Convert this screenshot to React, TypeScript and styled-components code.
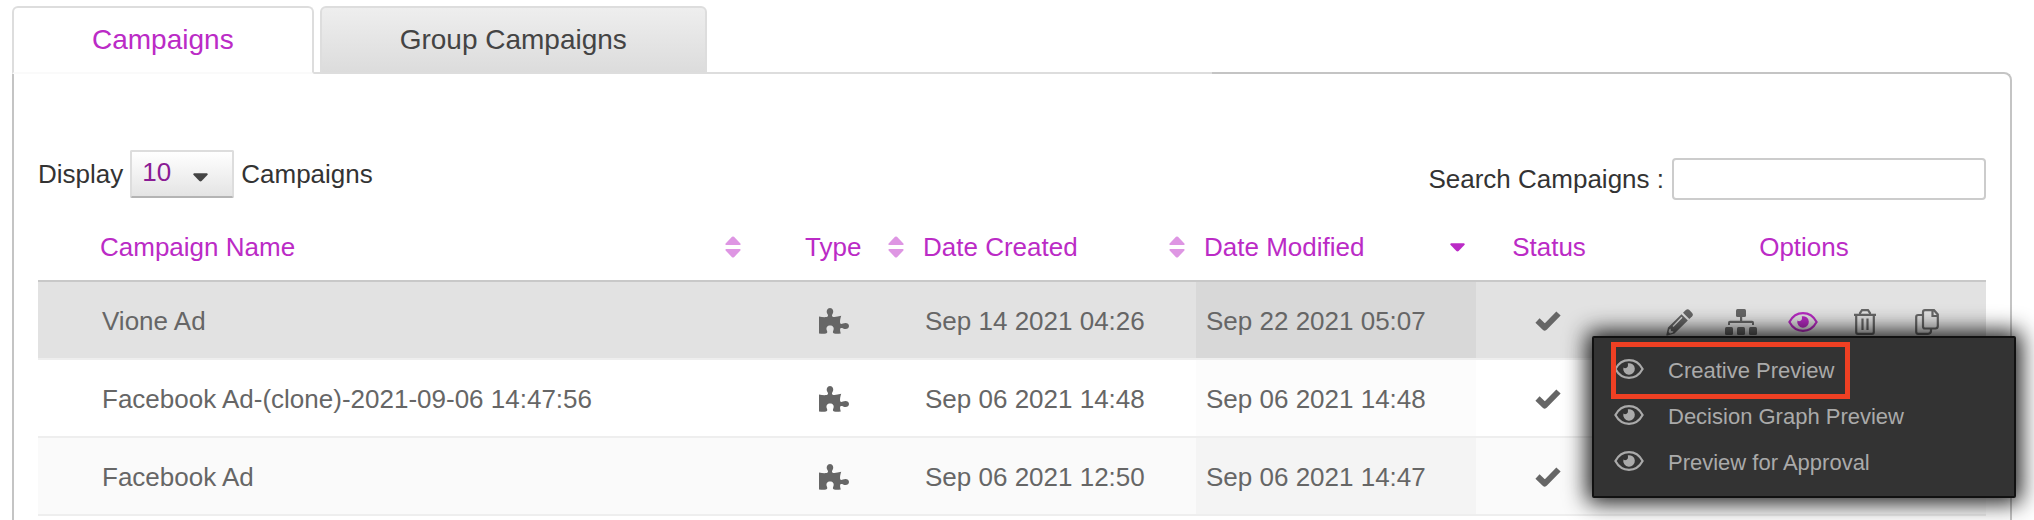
import React from "react";
import styled, { createGlobalStyle } from "styled-components";

const Global = createGlobalStyle`
  *, *::before, *::after { box-sizing: border-box; }
  body {
    margin: 0;
    background: #fff;
    color: #333;
    font: 26px/30px "Liberation Sans", Arial, sans-serif;
  }
  button, input, select { font: inherit; color: inherit; }
`;

const Page = styled.main`
  padding: 6px 22px 0 12px;
`;

const Tabs = styled.nav`
  position: relative;
  display: flex;
  gap: 6px;
  width: 60%;
  height: 68px;
  border-bottom: 2px solid #ddd;
`;

const Tab = styled.button<{ $active?: boolean }>`
  height: 68px;
  padding: 0 78px;
  border: 2px solid #ddd;
  border-bottom-color: ${(p) => (p.$active ? "#fafafa" : "#ddd")};
  border-radius: 6px 6px 0 0;
  background: ${(p) => (p.$active ? "#fff" : "linear-gradient(#eee, #dcdcdc)")};
  color: ${(p) => (p.$active ? "#bb2bc6" : "#444")};
  font-size: 28px;
  white-space: nowrap;
`;

const Panel = styled.section`
  margin-top: -2px;
  padding: 76px 24px 4px;
  border: 2px solid #c4c4c4;
  border-radius: 0 8px 0 0;
  border-bottom: 0;
`;

const Toolbar = styled.div`
  display: flex;
  justify-content: space-between;
  align-items: flex-start;
  height: 68px;
`;

const LengthLabel = styled.label`
  display: flex;
  align-items: center;
  gap: 7px;
  height: 48px;
`;

const SelectWrap = styled.span`
  position: relative;
  display: flex;
  svg {
    position: absolute;
    right: 26px;
    bottom: 16px;
    pointer-events: none;
  }
`;

const Select = styled.select`
  appearance: none;
  width: 104px;
  height: 48px;
  padding: 0 10px 4px;
  border: 2px solid #ddd;
  border-bottom-color: #b4b4b4;
  border-radius: 2px;
  background: linear-gradient(#fff, #e4e4e4);
  color: #8a1c94;
`;

const SearchLabel = styled.label`
  display: flex;
  align-items: center;
  gap: 8px;
  padding-top: 8px;
`;

const SearchInput = styled.input`
  width: 314px;
  height: 42px;
  padding: 0 8px;
  border: 2px solid #ccc;
  border-radius: 4px;
  background: #fff;
`;

const Table = styled.table`
  width: 100%;
  table-layout: fixed;
  border-collapse: separate;
  border-spacing: 0;
`;

const Col = styled.col<{ $width?: number }>`
  width: ${(p) => (p.$width ? `${p.$width}px` : "auto")};
`;

const Th = styled.th<{ $align?: string; $pad?: number }>`
  height: 64px;
  padding: 0 0 4px ${(p) => p.$pad ?? 8}px;
  border-bottom: 2px solid #c8c8c8;
  color: #bb2bc6;
  font-weight: normal;
  text-align: ${(p) => p.$align ?? "left"};
  white-space: nowrap;
`;

const HeadInner = styled.div<{ $end?: number }>`
  display: flex;
  justify-content: space-between;
  align-items: center;
  padding-right: ${(p) => p.$end ?? 11}px;
`;

const Row = styled.tr<{ $bg: string; $sorted: string }>`
  background: ${(p) => p.$bg};
  td:nth-child(4) { background: ${(p) => p.$sorted}; }
`;

const Td = styled.td<{ $pad?: number }>`
  height: 78px;
  padding: 2px 0 0 ${(p) => p.$pad ?? 10}px;
  border-bottom: 2px solid #eee;
  color: #666;
  white-space: nowrap;
  svg { display: block; }
`;

const Options = styled.div`
  position: relative;
  display: flex;
  align-items: center;
  gap: 30px;
  padding-top: 2px;
`;

const IconButton = styled.button<{ $active?: boolean }>`
  display: flex;
  justify-content: center;
  align-items: center;
  width: 32px;
  height: 28px;
  padding: 0;
  border: 0;
  background: none;
  color: ${(p) => (p.$active ? "#b52ac0" : "#666")};
`;

const Menu = styled.ul`
  position: absolute;
  top: 30px;
  left: -71px;
  z-index: 1;
  width: 424px;
  height: 162px;
  margin: 0;
  padding: 4px 16px;
  border: 2px solid #111;
  border-radius: 2px;
  background: #333;
  box-shadow: 0 0 22px 5px rgba(0, 0, 0, 0.9);
  list-style: none;
`;

const MenuItem = styled.li`
  display: flex;
  height: 46px;
`;

const MenuLink = styled.a`
  position: relative;
  display: flex;
  align-items: center;
  gap: 24px;
  height: 57px;
  padding: 0 16px 0 4px;
  color: #aaa;
  font-size: 22px;
  text-decoration: none;
  svg { margin-bottom: 4px; }
`;

const Highlight = styled.span`
  position: absolute;
  inset: 0 0 0 1px;
  border: 5px solid #ef4023;
`;

const Down = ({ color }: { color: string }) => (
  <svg width="15" height="9" viewBox="0 0 16 9" aria-hidden="true">
    <path d="M1 0h14q1 .6.6 1.5L9.200 8.200q-1.200 1-2.400 0L.4 1.500Q0 .6 1 0z" fill={color} />
  </svg>
);

const Sort = () => (
  <svg width="16" height="22" viewBox="0 0 16 22" fill="#de96e3" aria-hidden="true">
    <path d="M1 9h14q1-.6.4-1.500L9 .8Q8 0 7 .8L.6 7.500Q0 8.400 1 9zM1 13h14q1 .6.4 1.500L9 21.200q-1 .8-2 0L.6 14.500Q0 13.600 1 13z" />
  </svg>
);

const Puzzle = () => (
  <svg width="30" height="26" viewBox="0 0 30 26" fill="currentColor" aria-hidden="true">
    <path d="M0 8.600c3 .5 5.500.7 7.800.4 1.500-.3 1.500-1.600.7-2.900C6.700 3.200 8.300 0 11 0s4.300 3.200 2.500 6.100c-.8 1.300-.8 2.500.7 2.800 2.300.2 5-.2 8-1.100-.9 2.700-1.300 5-1.100 7 .2 1.400 1.500 1.400 2.800.8 3-1.500 6.100-.2 6.100 2.400s-3 3.900-5.900 2.400c-1.500-.8-2.900-.6-3 .9-.1 1.500.2 2.600.7 4.300-2.600.3-4.600.4-6.700 0-1.400-.4-1.400-1.500-.8-3 1.200-3-.5-5-3.200-5s-4.400 2-3.200 5c.6 1.500.6 2.700-.9 3-2.200.3-4.500.3-7-.2z" />
  </svg>
);

const Check = () => (
  <svg width="26" height="20" viewBox="0 0 26 20" fill="none" aria-hidden="true">
    <path d="M2.500 9.500l7.300 7L23.500 2.500" stroke="currentColor" strokeWidth="6" strokeLinejoin="round" />
  </svg>
);

const Pencil = () => (
  <svg width="27" height="27" viewBox="0 0 27 27" fill="currentColor" aria-hidden="true">
    <path fillRule="evenodd" d="M15.500 5.200l6.300 6.300L8.500 24.500 1.500 26.500Q0 27 .4 25.400L2 18.500zM4.500 19.500l-1.300 1-.6 2.500 1.400 1.400 2.600-.7.9-1.200-2.500-.5zM7.500 18l9-9.200-1-1-9 9.200z" />
    <path d="M17 3.800l2.800-2.800q2-1.500 3.600 0l2.800 2.900q1.400 1.800 0 3.400l-2.900 2.800z" />
  </svg>
);

const Sitemap = () => (
  <svg width="32" height="26" viewBox="0 0 32 26" fill="currentColor" aria-hidden="true">
    <rect x="11" width="10" height="8" rx="1.500" />
    <path d="M15 8h2.200v3.800H27q2 0 2 2V16h-2v-2H5v2H3v-2.200q0-2 2-2h10z" />
    <rect y="18" width="8" height="8" rx="1.500" />
    <rect x="12" y="18" width="8" height="8" rx="1.500" />
    <rect x="24" y="18" width="8" height="8" rx="1.500" />
  </svg>
);

const Eye = () => (
  <svg width="30" height="20" viewBox="0 0 30 20" aria-hidden="true">
    <path d="M1.400 10C4.500 4.300 9.300 1.200 15 1.200S25.500 4.300 28.600 10C25.500 15.700 20.700 18.800 15 18.800S4.500 15.700 1.400 10z" fill="none" stroke="currentColor" strokeWidth="2.200" />
    <path d="M13.800 4.300A5.800 5.800 0 1 1 9.400 8.600q1.500 1.200 3.300.2t1.100-4.500z" fill="currentColor" />
  </svg>
);

const Trash = () => (
  <svg width="24" height="26" viewBox="0 0 24 26" fill="none" stroke="currentColor" strokeWidth="2.200" aria-hidden="true">
    <path d="M1 5.800h22M7 6V4l2-2.800h6L17 4v2M3.200 6v17q0 1.800 1.800 1.800h14q1.800 0 1.800-1.800V6M9.500 9.500v11.500M14.500 9.500v11.500" />
  </svg>
);

const Copy = () => (
  <svg width="24" height="26" viewBox="0 0 24 26" fill="none" stroke="currentColor" strokeWidth="2.200" aria-hidden="true">
    <path d="M10 1.200h9l3.800 4.300V17q0 2.500-2.500 2.500H10q-2 0-2-2v-14.300q0-2 2-2zM17.500 1v6h5.500M8 6H3.200q-2 0-2 2v14.800q0 2 2 2h9.800q3 0 3-3v-2" />
  </svg>
);

const rows = [
  { name: "Vione Ad", created: "Sep 14 2021 04:26", modified: "Sep 22 2021 05:07", bg: "#e2e2e2", sorted: "#d8d8d8" },
  { name: "Facebook Ad-(clone)-2021-09-06 14:47:56", created: "Sep 06 2021 14:48", modified: "Sep 06 2021 14:48", bg: "#fff", sorted: "#fcfcfc" },
  { name: "Facebook Ad", created: "Sep 06 2021 12:50", modified: "Sep 06 2021 14:47", bg: "#fafafa", sorted: "#f4f4f4" },
];

const previews = ["Creative Preview", "Decision Graph Preview", "Preview for Approval"];

export default function App() {
  return (
    <Page>
      <Global />
      <Tabs>
        <Tab type="button" $active>Campaigns</Tab>
        <Tab type="button">Group Campaigns</Tab>
      </Tabs>
      <Panel>
        <Toolbar>
          <LengthLabel>
            Display
            <SelectWrap>
              <Select defaultValue="10"><option>10</option></Select>
              <Down color="#444" />
            </SelectWrap>
            Campaigns
          </LengthLabel>
          <SearchLabel>
            Search Campaigns :
            <SearchInput type="text" />
          </SearchLabel>
        </Toolbar>
        <Table>
          <colgroup>
            <Col />
            <Col $width={136} />
            <Col $width={281} />
            <Col $width={280} />
            <Col $width={146} />
            <Col $width={364} />
          </colgroup>
          <thead>
            <tr>
              <Th $pad={62}><HeadInner $end={38}>Campaign Name<Sort /></HeadInner></Th>
              <Th $pad={26}><HeadInner>Type<Sort /></HeadInner></Th>
              <Th><HeadInner>Date Created<Sort /></HeadInner></Th>
              <Th><HeadInner>Date Modified<Down color="#bb2bc6" /></HeadInner></Th>
              <Th $align="center" $pad={0}>Status</Th>
              <Th $align="center" $pad={0}>Options</Th>
            </tr>
          </thead>
          <tbody>
            {rows.map((row, i) => (
              <Row key={row.name} $bg={row.bg} $sorted={row.sorted}>
                <Td $pad={64}>{row.name}</Td>
                <Td $pad={40}><Puzzle /></Td>
                <Td>{row.created}</Td>
                <Td>{row.modified}</Td>
                <Td $pad={59}><Check /></Td>
                <Td $pad={41}>
                  <Options>
                    <IconButton aria-label="Edit"><Pencil /></IconButton>
                    <IconButton aria-label="Decision graph"><Sitemap /></IconButton>
                    <IconButton aria-label="Preview" $active={i === 0}><Eye /></IconButton>
                    <IconButton aria-label="Delete"><Trash /></IconButton>
                    <IconButton aria-label="Clone"><Copy /></IconButton>
                    {i === 0 && (
                      <Menu>
                        {previews.map((label, n) => (
                          <MenuItem key={label}>
                            <MenuLink href="#">
                              <Eye />
                              {label}
                              {n === 0 && <Highlight />}
                            </MenuLink>
                          </MenuItem>
                        ))}
                      </Menu>
                    )}
                  </Options>
                </Td>
              </Row>
            ))}
          </tbody>
        </Table>
      </Panel>
    </Page>
  );
}
